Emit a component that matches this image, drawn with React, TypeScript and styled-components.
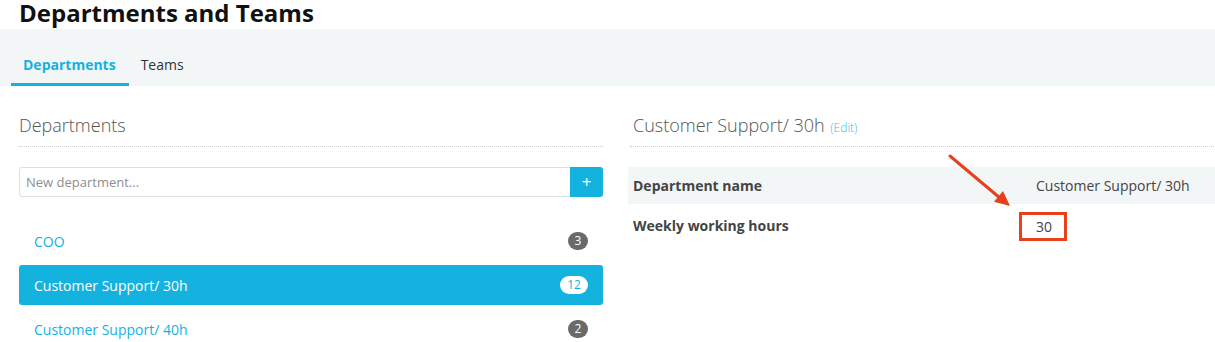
import React from "react";
import styled, { createGlobalStyle } from "styled-components";

const blue = "#14b2de";

const GlobalStyle = createGlobalStyle`
  html, body {
    margin: 0;
    padding: 0;
    background: #fff;
    font-family: "Open Sans", "Liberation Sans", sans-serif;
    color: #444;
    overflow: hidden;
  }
  * { box-sizing: border-box; }
`;

const departments = [
  { name: "COO", count: 3 },
  { name: "Customer Support/ 30h", count: 12, active: true },
  { name: "Customer Support/ 40h", count: 2 },
];

const App: React.FC = () => {
  return (
    <>
      <GlobalStyle />
      <PageTitle>Departments and Teams</PageTitle>
      <TabBar>
        <Tab active>Departments</Tab>
        <Tab>Teams</Tab>
      </TabBar>
      <Content>
        <Column>
          <SectionHeading>Departments</SectionHeading>
          <InputGroup>
            <TextInput placeholder="New department..." />
            <AddButton>+</AddButton>
          </InputGroup>
          <DeptList>
            {departments.map((d) => (
              <DeptItem key={d.name} active={d.active}>
                <span>{d.name}</span>
                <Badge active={d.active}>{d.count}</Badge>
              </DeptItem>
            ))}
          </DeptList>
        </Column>
        <Column>
          <SectionHeading inset>
            Customer Support/ 30h <EditLink>(Edit)</EditLink>
          </SectionHeading>
          <InfoTable>
            <tbody>
              <InfoRow shaded>
                <LabelCell>Department name</LabelCell>
                <ValueCell>Customer Support/ 30h</ValueCell>
              </InfoRow>
              <InfoRow tall>
                <LabelCell>Weekly working hours</LabelCell>
                <ValueCell>
                  <Highlight>30</Highlight>
                </ValueCell>
              </InfoRow>
            </tbody>
          </InfoTable>
          <Arrow viewBox="0 0 75 65" width="75" height="65">
            <line x1="7" y1="8" x2="57" y2="50" stroke="#e8401c" strokeWidth="3" strokeLinecap="round" />
            <polygon points="67,58 51,53.8 60,43" fill="#e8401c" />
          </Arrow>
        </Column>
      </Content>
    </>
  );
};

const PageTitle = styled.h1`
  margin: 0;
  padding-left: 19px;
  height: 29px;
  font-size: 24px;
  line-height: 25px;
  font-weight: 700;
  color: #111;
  white-space: nowrap;
`;

const TabBar = styled.div`
  display: flex;
  align-items: flex-end;
  height: 57px;
  padding-left: 11px;
  background: #f3f6f7;
`;

const Tab = styled.div<{ active?: boolean }>`
  height: 40px;
  padding: 0 13px 0 12px;
  font-size: 14px;
  line-height: 37px;
  font-weight: ${(p) => (p.active ? 700 : 400)};
  color: ${(p) => (p.active ? blue : "#333")};
  border-bottom: 3px solid ${(p) => (p.active ? blue : "transparent")};
`;

const Content = styled.div`
  display: grid;
  grid-template-columns: 584px 600px;
  column-gap: 25px;
  padding-left: 19px;
`;

const Column = styled.div`
  position: relative;
  min-width: 0;
`;

const SectionHeading = styled.h2<{ inset?: boolean }>`
  margin: 27px 0 0 ${(p) => (p.inset ? "2px" : "0")};
  padding: 0 0 9px ${(p) => (p.inset ? "3px" : "0")};
  height: 34px;
  font-size: 18px;
  line-height: 24px;
  font-weight: 300;
  color: #555;
  border-bottom: 1px dotted #cfcfcf;
  white-space: nowrap;
`;

const EditLink = styled.a`
  font-size: 12px;
  line-height: 0;
  color: #3cbde3;
  margin-left: 1px;
  cursor: pointer;
`;

const InputGroup = styled.div`
  display: flex;
  margin-top: 20px;
  height: 30px;
`;

const TextInput = styled.input`
  flex: 1;
  height: 30px;
  border: 1px solid #dbe2e6;
  border-right: none;
  border-radius: 3px 0 0 3px;
  padding: 0 6px;
  font-family: inherit;
  font-size: 13px;
  color: #444;
  outline: none;
  &::placeholder {
    color: #8e8e8e;
  }
`;

const AddButton = styled.button`
  width: 33px;
  height: 30px;
  border: none;
  border-radius: 0 3px 3px 0;
  background: ${blue};
  color: #fff;
  font-family: inherit;
  font-size: 17px;
  line-height: 30px;
  padding: 0;
`;

const DeptList = styled.div`
  display: flex;
  flex-direction: column;
  gap: 4px;
  margin-top: 24px;
`;

const DeptItem = styled.div<{ active?: boolean }>`
  display: flex;
  align-items: center;
  justify-content: space-between;
  height: 40px;
  padding: 0 15px;
  border-radius: 3px;
  font-size: 14px;
  background: ${(p) => (p.active ? blue : "transparent")};
  color: ${(p) => (p.active ? "#fff" : blue)};
`;

const Badge = styled.span<{ active?: boolean }>`
  min-width: ${(p) => (p.active ? "28px" : "20px")};
  height: 18px;
  padding: 0 4px;
  border-radius: 9px;
  font-size: 12px;
  line-height: 18px;
  text-align: center;
  background: ${(p) => (p.active ? "#fff" : "#6a6a6a")};
  color: ${(p) => (p.active ? blue : "#fff")};
`;

const InfoTable = styled.table`
  margin-top: 20px;
  width: 600px;
  table-layout: fixed;
  border-collapse: collapse;
  font-size: 14px;
`;

const InfoRow = styled.tr<{ shaded?: boolean; tall?: boolean }>`
  background: ${(p) => (p.shaded ? "#f3f6f7" : "transparent")};
  & > td {
    padding: ${(p) => (p.tall ? "10px 5px 11px" : "8px 5px")};
    line-height: 21px;
  }
`;

const LabelCell = styled.td`
  width: 403px;
  font-weight: 700;
  color: #444;
`;

const ValueCell = styled.td`
  color: #444;
  white-space: nowrap;
`;

const Highlight = styled.span`
  display: inline-block;
  margin: -4px 0 -4px -17px;
  padding: 0 12px 0 14px;
  line-height: 23px;
  border: 3px solid #e8401c;
  vertical-align: middle;
`;

const Arrow = styled.svg`
  position: absolute;
  left: 315px;
  top: 62px;
  overflow: visible;
`;

export default App;
